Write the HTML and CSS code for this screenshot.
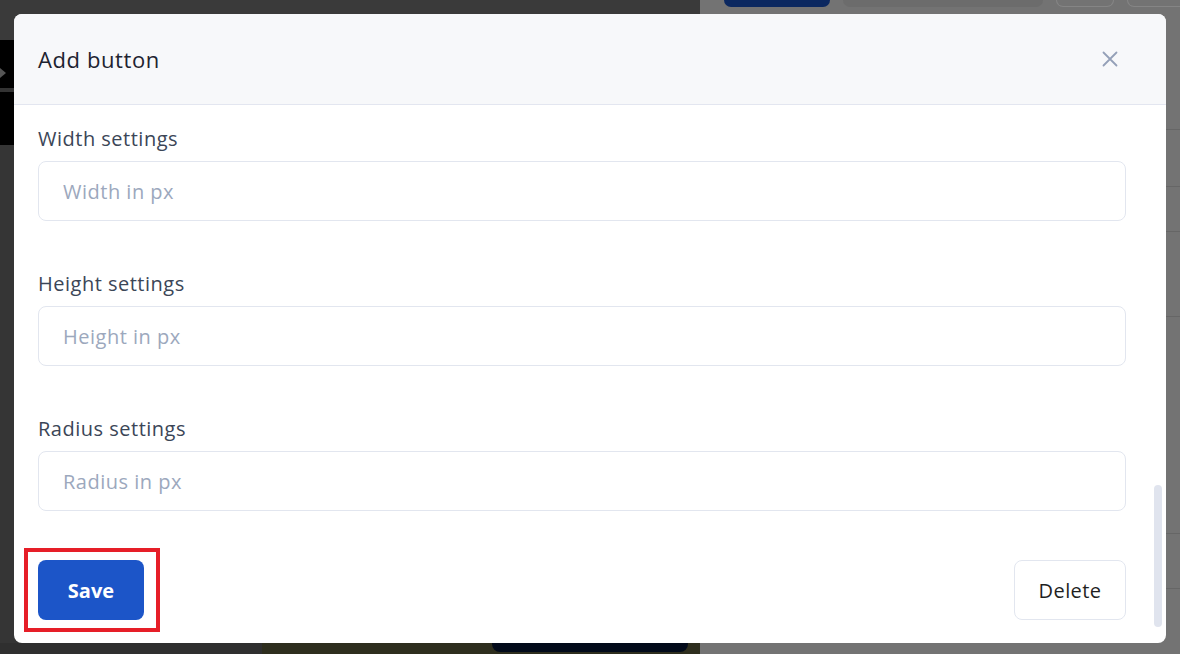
FILE: index.html
```html
<!DOCTYPE html>
<html>
<head>
<meta charset="utf-8">
<link rel="stylesheet" href="styles.css">
</head>
<body>
<div class="backdrop">
  <div class="bg-left">
    <div class="bg-left-top"></div>
    <div class="black-block">
      <div class="black-a"><span class="tri"></span></div>
      <div class="black-sep"></div>
      <div class="black-b"></div>
    </div>
    <div class="bg-left-fill"></div>
    <div class="bg-left-bottom">
      <div class="bb-dark"></div>
      <div class="bb-olive"><div class="navy-btn"></div></div>
    </div>
  </div>
  <div class="bg-right">
    <div class="top-bar">
      <div class="tb-navy"></div>
      <div class="tb-pill"></div>
      <div class="tb-outline"></div>
      <div class="tb-outline wide"></div>
    </div>
    <div class="rows">
      <div class="row r1"></div>
      <div class="row r2"></div>
      <div class="row r3"></div>
      <div class="row r4"></div>
      <div class="row r5"></div>
      <div class="row r6"></div>
    </div>
  </div>
</div>

<div class="modal">
  <div class="modal-header">
    <h2 class="modal-title">Add button</h2>
    <button class="close-btn" aria-label="Close">
      <svg width="16" height="16" viewBox="0 0 16 16"><path d="M1.5 1.5 L14.5 14.5 M14.5 1.5 L1.5 14.5" stroke="#94a0b8" stroke-width="1.8" stroke-linecap="round" fill="none"/></svg>
    </button>
  </div>
  <div class="modal-body">
    <div class="field">
      <label class="field-label">Width settings</label>
      <input class="field-input" placeholder="Width in px">
    </div>
    <div class="field">
      <label class="field-label">Height settings</label>
      <input class="field-input" placeholder="Height in px">
    </div>
    <div class="field field-last">
      <label class="field-label">Radius settings</label>
      <input class="field-input" placeholder="Radius in px">
    </div>
    <div class="modal-footer">
      <div class="save-wrap">
        <button class="btn-save">Save</button>
        <div class="highlight"></div>
      </div>
      <button class="btn-delete">Delete</button>
    </div>
  </div>
  <div class="scrollbar"></div>
</div>
</body>
</html>
```
FILE: styles.css
```css
* { box-sizing: border-box; }
html, body { margin: 0; padding: 0; }
body {
  width: 1180px;
  height: 654px;
  overflow: hidden;
  font-family: "Open Sans", sans-serif;
  position: relative;
}

.backdrop {
  display: flex;
  width: 1180px;
  height: 654px;
}
.bg-left {
  width: 700px;
  flex-shrink: 0;
  display: flex;
  flex-direction: column;
  background: #353535;
}
.bg-left-top { height: 40px; background: #3a3a3a; }
.black-block { width: 14px; height: 105px; display: flex; flex-direction: column; }
.black-a { height: 48px; background: #000; position: relative; }
.tri {
  position: absolute; left: 0; top: 28px;
  border-left: 6px solid #555; border-top: 5px solid transparent; border-bottom: 5px solid transparent;
}
.black-sep { height: 4px; background: #333; }
.black-b { height: 53px; background: #000; }
.bg-left-fill { flex: 1; }
.bg-left-bottom { height: 11px; display: flex; }
.bb-dark { width: 262px; background: #2f2f2f; }
.bb-olive { flex: 1; background: #2e2e1e; padding-left: 230px; }
.navy-btn { width: 196px; height: 9px; background: #020a1a; border-radius: 0 0 8px 8px; }

.bg-right {
  flex: 1;
  min-width: 0;
  overflow: hidden;
  background: #737373;
  display: flex;
  flex-direction: column;
}
.top-bar { height: 14px; flex-shrink: 0; display: flex; gap: 13px; padding-left: 24px; align-items: flex-start; }
.tb-navy { flex-shrink: 0; width: 106px; height: 7px; background: #0b2860; border-radius: 0 0 7px 7px; }
.tb-pill { flex-shrink: 0; width: 200px; height: 7px; background: #6c6c6c; border-radius: 0 0 7px 7px; }
.tb-outline { flex-shrink: 0; width: 58px; height: 7px; border: 1px solid #858585; border-top: none; border-radius: 0 0 7px 7px; }
.tb-outline.wide { width: 70px; }
.rows { flex: 1; display: flex; flex-direction: column; }
.row { border-bottom: 1px solid #666; }
.r1 { height: 116px; }
.r2 { height: 57px; }
.r3 { height: 45px; }
.r4 { height: 85px; }
.r5 { height: 217px; }
.r6 { height: 55px; }

.modal {
  position: absolute;
  left: 14px;
  top: 14px;
  width: 1152px;
  height: 629px;
  background: #fff;
  border-radius: 8px;
  overflow: hidden;
  display: flex;
  flex-direction: column;
}
.modal-header {
  height: 91px;
  flex-shrink: 0;
  background: #f7f8fa;
  border-bottom: 1px solid #e3e6f0;
  display: flex;
  align-items: center;
  justify-content: space-between;
  padding: 0 48px 0 24px;
}
.modal-title {
  margin: 0;
  font-size: 22px;
  letter-spacing: 0.6px;
  font-weight: 400;
  color: #1d2330;
}
.close-btn {
  border: none;
  background: none;
  padding: 0;
  width: 16px;
  height: 16px;
  display: flex;
}
.modal-body {
  flex: 1;
  padding: 22px 40px 0 24px;
  display: flex;
  flex-direction: column;
}
.field { display: flex; flex-direction: column; margin-bottom: 51px; }
.field-last { margin-bottom: 49px; }
.field-label {
  font-size: 20px;
  letter-spacing: 0.5px;
  line-height: 24px;
  color: #3b4657;
  margin-bottom: 10px;
}
.field-input {
  height: 60px;
  border: 1px solid #e2e6ef;
  border-radius: 8px;
  padding: 0 24px;
  font-family: inherit;
  font-size: 20px;
  letter-spacing: 0.5px;
  color: #222;
  outline: none;
}
.field-input::placeholder { color: #9ca8bd; }

.modal-footer {
  display: flex;
  justify-content: space-between;
  align-items: center;
}
.save-wrap { position: relative; display: flex; }
.btn-save {
  width: 106px;
  height: 60px;
  border: none;
  border-radius: 8px;
  background: #1c55c8;
  color: #fff;
  font-family: inherit;
  font-size: 20px;
  font-weight: 700;
}
.highlight {
  position: absolute;
  left: -14px;
  top: -12px;
  width: 136px;
  height: 84px;
  border: 4px solid #e61e28;
  pointer-events: none;
}
.btn-delete {
  width: 112px;
  height: 60px;
  border: 1px solid #e2e6ef;
  border-radius: 8px;
  background: #fff;
  color: #1f1f1f;
  font-family: inherit;
  font-size: 20px;
  letter-spacing: 0.4px;
}
.scrollbar {
  position: absolute;
  right: 4px;
  top: 471px;
  width: 8px;
  height: 142px;
  background: #e0e4ee;
  border-radius: 4px;
}
```
